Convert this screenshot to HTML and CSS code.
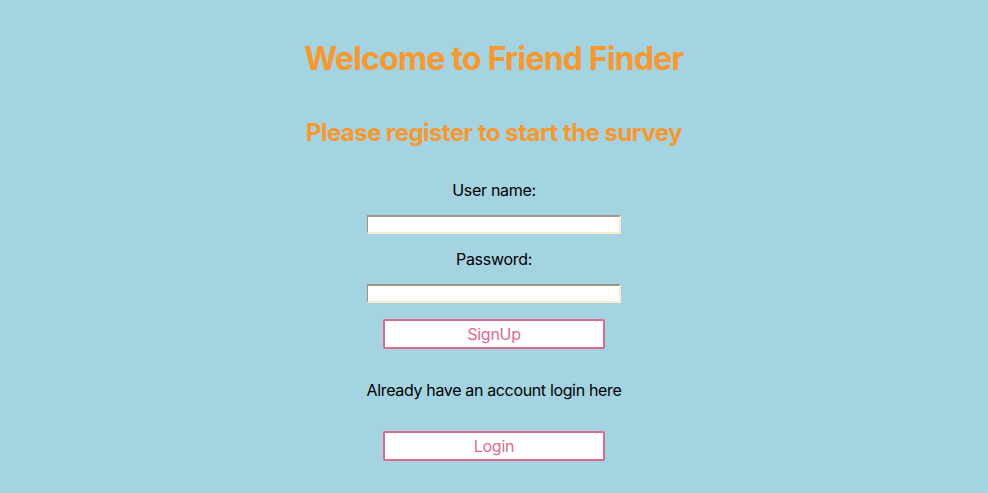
FILE: index.html
```html
<!DOCTYPE html>
<html>
<head>
<meta charset="utf-8">
<link rel="stylesheet" href="styles.css">
</head>
<body>
<main class="page">
  <h1 class="title">Welcome to Friend Finder</h1>
  <h2 class="subtitle">Please register to start the survey</h2>
  <form class="form">
    <label class="label" for="user">User name:</label>
    <input class="field" id="user" type="text">
    <label class="label label-second" for="pass">Password:</label>
    <input class="field" id="pass" type="password">
    <button class="btn btn-signup" type="button">SignUp</button>
    <p class="note">Already have an account login here</p>
    <button class="btn btn-login" type="button">Login</button>
  </form>
</main>
</body>
</html>
```
FILE: styles.css
```css
html, body {
  margin: 0;
  padding: 0;
  background: #a4d3e1;
  height: 100%;
}
body {
  font-family: Inter, "Noto Sans", sans-serif;
  color: #000;
}
.page {
  display: flex;
  flex-direction: column;
  align-items: center;
  padding-top: 39px;
}
.title {
  margin: 0;
  font-size: 32px;
  line-height: 40px;
  font-weight: 700;
  letter-spacing: -0.8px;
  color: #f7992f;
}
.subtitle {
  margin: 39px 0 0;
  font-size: 24px;
  line-height: 30px;
  font-weight: 700;
  letter-spacing: -0.55px;
  color: #f7992f;
}
.form {
  display: flex;
  flex-direction: column;
  align-items: center;
  margin-top: 32px;
}
.label {
  font-size: 16px;
  line-height: 20px;
  letter-spacing: -0.3px;
}
.label-second {
  margin-top: 15px;
}
.field {
  margin: 15px 0 0;
  box-sizing: border-box;
  width: 254px;
  height: 19px;
  padding: 0;
  border-style: solid;
  border-width: 2px 2px 2px 1px;
  border-color: #9f9689 #fdebcd #fdebcd #9f9689;
  background: #fff;
}
.btn {
  box-sizing: border-box;
  width: 222px;
  height: 30px;
  margin: 16px 0 0;
  background: #fff;
  border: 2px solid #db6b8b;
  border-radius: 2px;
  color: #db6b8b;
  font-family: Inter, "Noto Sans", sans-serif;
  font-size: 16px;
  letter-spacing: -0.3px;
  padding: 0;
}
.note {
  margin: 31px 0 0;
  font-size: 16px;
  line-height: 20px;
  letter-spacing: -0.35px;
}
.btn-login {
  margin-top: 31px;
}
```
